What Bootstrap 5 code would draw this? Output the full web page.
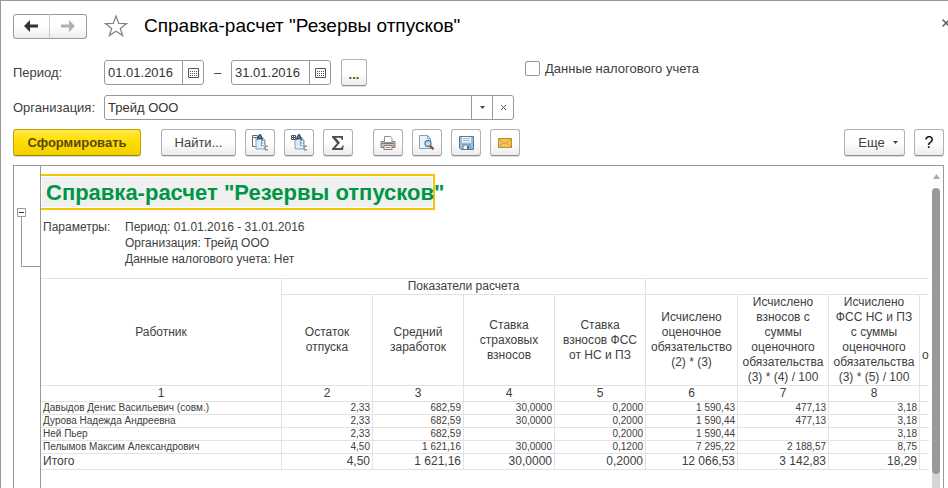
<!DOCTYPE html>
<html lang="ru">
<head>
<meta charset="utf-8">
<meta name="viewport" content="width=device-width, initial-scale=1">
<title>Справка-расчет "Резервы отпусков"</title>
<link rel="stylesheet" href="https://cdn.jsdelivr.net/npm/bootstrap@5.3.0/dist/css/bootstrap.min.css">
<style>
  body { font: 13px/16px "Liberation Sans", Arial, sans-serif; color: #404040; background: #fff; }
  svg { display: block; }
  .window { border-top: 1px solid #999; border-left: 1px solid #999; padding-left: 12px; }
  .titlebar { height: 50px; }
  .form-title { font-size: 19px; line-height: 24px; color: #000; margin: 0 0 0 16px; font-weight: 400; }
  .btn-tool { --bs-btn-padding-x: 0; --bs-btn-padding-y: 0; --bs-btn-font-size: 13px; --bs-btn-color: #404040;
    --bs-btn-border-color: #b0b0b0; --bs-btn-border-radius: 3px; --bs-btn-hover-color: #404040; --bs-btn-hover-border-color: #888;
    width: 30px; height: 27px; display: flex; align-items: center; justify-content: center; flex: none; line-height: 20px;
    background: linear-gradient(#fff 50%, #ececec); border-bottom-color: #8e8e8e; box-shadow: 0 1px 0 #ddd; }
  .btn-go { width: 128px; font-weight: 700; color: #57480f; background: linear-gradient(#ffe94a, #ffdf00 45%, #f2cf00); border-color: #c0a010; border-bottom-color: #9c8200; }
  .btn-find { width: 75px; margin-left: 11px; }
  .btn-more { width: 61px; gap: 8px; padding-left: 7px; }
  .btn-dots { width: 26px; color: #6b4a00; font-weight: 700; margin-left: 10px; padding-top: 4px; }
  .btn-help { font-size: 16px; color: #000; }
  .btn-nav { width: 37px; height: 25px; box-shadow: none; border-color: #999; }
  .btn-nav-next { width: 38px; border-left-color: #ccc; }
  .btn-plain { border: 0; background: none; padding: 0; display: flex; align-items: center; justify-content: center; }
  .btn-star { margin-left: 17px; }
  .btn-close-form { height: 44px; }
  .caption-col { width: 91px; flex: none; }
  .field { height: 25px; border: 1px solid #999; border-radius: 3px; background: #fff; }
  .field input { border: 0; outline: 0; padding: 0 0 0 3px; min-width: 0; flex: 1; color: #333; background: none; font-size: 13px; }
  .field button { width: 21px; border-left: 1px solid #999; }
  .field-date { width: 100px; }
  .field-org { width: 410px; }
  .field-dash { width: 27px; text-align: center; }
  .row-period { height: 27px; }
  .row-org { margin-top: 9px; }
  .row-cmd { margin-top: 9px; gap: 9px; padding-right: 4px; }
  .cmd-gap { width: 2px; }
  .tax-check { margin-left: 158px; height: 19px; gap: 5px; }
  .tax-check input { appearance: none; width: 15px; height: 15px; border: 1px solid #999; border-radius: 2px; margin: 0; background: #fff; }
  .tax-check input:checked { background: #777; }
  .sheet-frame { margin: 9px 4px 0 0; border: solid #999; border-width: 1px 1px 0 1px; }
  .gutter { width: 27px; border-right: 1px solid #999; padding: 42px 0 0 3px; flex: none; }
  .sheet { min-width: 0; padding-top: 8px; overflow: hidden; }
  .report-title { width: 394px; height: 36px; border: 2px solid #fbc400; border-left: 0; background: #f0f0f0; box-shadow: inset 0 0 0 1px #fff;
    font-size: 22px; line-height: 34px; font-weight: 700; color: #009646; margin: 0; padding-left: 5px; white-space: nowrap; }
  .params { margin: 9px 0 11px 2px; font-size: 12px; }
  .params dt { width: 82px; font-weight: 400; }
  .params dd { margin: 0; }
  .report { width: 100%; font-size: 12px; table-layout: fixed; border-collapse: separate; border-spacing: 0; border-top: 1px solid #e2e2e2; }
  .report th, .report td { border-right: 1px solid #e2e2e2; border-bottom: 1px solid #e2e2e2; padding: 0 2px; font-weight: 400; line-height: 15px; height: 16px; white-space: nowrap; }
  .report th { text-align: center; vertical-align: middle; }
  .report td { text-align: right; }
  .report td:first-child { text-align: left; }
  .report tr > :last-child { border-right: 0; }
  .report .heads th { height: 91px; }
  .report .detail td { font-size: 10px; line-height: 12px; height: 13px; }
  .w-name { width: 241px; } .w-num { width: 91px; } .w-sum { width: 92px; }
  .scroller { width: 8px; margin: 8px 3px 0 3px; flex: none; }
  .scroll-thumb { background: #999; border-radius: 4px; margin-top: 9px; }
  .scroll-rest { height: 18px; margin-top: -4px; background: #d6d6d6; }
  .z-front { z-index: 1; position: relative; }
</style>
</head>
<body>
<main class="window d-flex flex-column min-vh-100">
  <header class="titlebar d-flex align-items-center">
    <div class="btn-group" role="group" aria-label="Навигация">
      <button type="button" class="btn btn-tool btn-nav" aria-label="Назад"><svg width="15" height="12"><path d="M0 6 6 0 6 4.5 14 4.5 14 7.5 6 7.5 6 12z" fill="#333"/></svg></button>
      <button type="button" class="btn btn-tool btn-nav btn-nav-next" aria-label="Вперед"><svg width="15" height="12"><path d="M14 6 8 0 8 4.5 0 4.5 0 7.5 8 7.5 8 12z" fill="#b0b0b0"/></svg></button>
    </div>
    <button type="button" class="btn-plain btn-star" aria-label="В избранное"><svg width="24" height="24"><path d="M12 2 14.7 9.500 22.600 9.600 16.300 14.400 18.600 21.600 12 17.200 5.400 21.600 7.700 14.400 1.400 9.600 9.300 9.500z" fill="none" stroke="#808080" stroke-width="1.200"/></svg></button>
    <h1 class="form-title">Справка-расчет "Резервы отпусков"</h1>
    <button type="button" class="btn-plain btn-close-form ms-auto align-self-start" aria-label="Закрыть"><svg width="6" height="8"><path d="M0.500 0.500 7.500 7.500M7.500 0.500 0.500 7.500" stroke="#555" stroke-width="1.400"/></svg></button>
  </header>

  <div class="row-period d-flex align-items-center mt-2">
    <label class="caption-col" for="from">Период:</label>
    <div class="field field-date d-flex"><input id="from" value="01.01.2016"><button type="button" class="btn-plain" aria-label="Календарь"><svg width="11" height="10"><path d="M.5.5h10v9H.5z" fill="none" stroke="#555"/><path d="M2 3.500h7M2 5.500h7M2 7.500h7" stroke="#555" stroke-dasharray="1 1"/></svg></button></div>
    <span class="field-dash">–</span>
    <div class="field field-date d-flex"><input aria-label="Конец периода" value="31.01.2016"><button type="button" class="btn-plain" aria-label="Календарь"><svg width="11" height="10"><path d="M.5.5h10v9H.5z" fill="none" stroke="#555"/><path d="M2 3.500h7M2 5.500h7M2 7.500h7" stroke="#555" stroke-dasharray="1 1"/></svg></button></div>
    <button type="button" class="btn btn-tool btn-dots">...</button>
    <div class="tax-check d-flex align-items-center align-self-start"><input type="checkbox" id="tax"><label for="tax">Данные налогового учета</label></div>
  </div>

  <div class="row-org d-flex align-items-center">
    <label class="caption-col" for="org">Организация:</label>
    <div class="field field-org d-flex"><input id="org" value="Трейд ООО"><button type="button" class="btn-plain" aria-label="Выбрать"><svg width="5" height="3"><path d="M0 0h5L2.500 3z" fill="#444"/></svg></button><button type="button" class="btn-plain" aria-label="Очистить"><svg width="5" height="5"><path d="M0 0 5 5M5 0 0 5" stroke="#555"/></svg></button></div>
  </div>

  <div class="row-cmd d-flex">
    <button type="button" class="btn btn-tool btn-go">Сформировать</button>
    <button type="button" class="btn btn-tool btn-find">Найти...</button>
    <button type="button" class="btn btn-tool" aria-label="Свернуть группы"><svg width="18" height="17"><path d="M5 3h6l3 3v9H5z" fill="#dcebf7" stroke="#7fa3c0"/><path d="M1.500 1.500h5v2h-5zM1.500 4v8.500h3" fill="#fff" stroke="#666"/><path d="M6.500 6 8.500 1h1L11.500 6M8 4.500h2.500" fill="none" stroke="#1f4e79" stroke-width="1.500"/><path d="M10.500 6.500v5h2q2-.5 1-2.500 1-2-1-2.500zM10.500 9h2" fill="#fff" stroke="#8797a8"/><path d="M17 12.500q-3-1.500-3 1.500t3 1.500" fill="none" stroke="#8c8c8c" stroke-width="1.300"/></svg></button>
    <button type="button" class="btn btn-tool" aria-label="Развернуть группы"><svg width="18" height="17"><path d="M5 3h6l3 3v9H5z" fill="#dcebf7" stroke="#7fa3c0"/><path d="M1.500 1.500h4v4h-4zM1 3.500h5M3.500 1v5" fill="#fff" stroke="#555"/><path d="M6.500 6 8.500 1h1L11.500 6M8 4.500h2.500" fill="none" stroke="#1f4e79" stroke-width="1.500"/><path d="M10.500 6.500v5h2q2-.5 1-2.500 1-2-1-2.500zM10.500 9h2" fill="#fff" stroke="#8797a8"/><path d="M17 12.500q-3-1.500-3 1.500t3 1.500" fill="none" stroke="#8c8c8c" stroke-width="1.300"/></svg></button>
    <button type="button" class="btn btn-tool" aria-label="Сумма"><svg width="12" height="14"><path d="M0 0h11v4h-1.200Q9.500 1.800 7.500 1.800H3.800L8 6.800 3.300 12H8q2 0 2.500-2.500h1.200L11 14H0v-1.200L5 7.200 0 1.200z" fill="#4d4d4d"/></svg></button>
    <span class="cmd-gap"></span>
    <button type="button" class="btn btn-tool" aria-label="Печать"><svg width="16" height="14"><path d="M1 5.500h14v6H1z" fill="#cfc3b5" stroke="#7c7c7c"/><path d="M4.500.5h6l1.500 2v4h-7.500z" fill="#fff" stroke="#8495a5"/><path d="M2 7.500h12" stroke="#777"/><path d="M4 9.500h8v4H4z" fill="#fff" stroke="#77808a"/><path d="M5.500 11.500h5" stroke="#c86b3c"/><path d="M13 9.500h1" stroke="#e05a20"/></svg></button>
    <button type="button" class="btn btn-tool" aria-label="Предварительный просмотр"><svg width="16" height="15"><path d="M.5.5h8l3 3v10H.5z" fill="#e9f3fa" stroke="#7fa3c0"/><path d="M8.500.5v3h3" fill="none" stroke="#7fa3c0"/><circle cx="9" cy="8.500" r="3" fill="#bfe0f5" stroke="#667f94" stroke-width="1.300"/><path d="M11 11 14.500 14.200" stroke="#9a4d20" stroke-width="2.400"/></svg></button>
    <button type="button" class="btn btn-tool" aria-label="Сохранить"><svg width="15" height="14"><path d="M.5.5h14v13H2L.5 12z" fill="#9dbdd5" stroke="#527c9b"/><path d="M3 1h9v5.500H3z" fill="#f4f8fb"/><path d="M4 2.500h7M4 4.500h7" stroke="#9dbbd0"/><path d="M4 9h7v4.500H4z" fill="#eef3f6" stroke="#527c9b"/><path d="M8 10h2v3H8z" fill="#45708f"/></svg></button>
    <button type="button" class="btn btn-tool" aria-label="Отправить"><svg width="14" height="10"><path d="M.5.5h13v9H.5z" fill="#f2c55c" stroke="#bd8820"/><path d="M1 1 7 6 13 1M1 9 5 4.800M13 9 9 4.800" fill="none" stroke="#cf9a35"/></svg></button>
    <button type="button" class="btn btn-tool btn-more ms-auto">Еще <svg width="5" height="3"><path d="M0 0h5L2.500 3z" fill="#444"/></svg></button>
    <button type="button" class="btn btn-tool btn-help">?</button>
  </div>

  <section class="sheet-frame d-flex flex-grow-1">
    <div class="gutter"><svg width="23" height="59"><path d="M4.500 9v49.500H23" fill="none" stroke="#999"/><path d="M.5.5h8v8h-8z" fill="#fff" stroke="#999"/><path d="M2 4.500h5" stroke="#333"/></svg></div>
    <div class="sheet flex-grow-1">
      <h2 class="report-title">Справка-расчет "Резервы отпусков"</h2>
      <dl class="params d-flex">
        <dt>Параметры:</dt>
        <dd>Период: 01.01.2016 - 31.01.2016<br>Организация: Трейд ООО<br>Данные налогового учета: Нет</dd>
      </dl>
      <table class="report">
        <colgroup><col class="w-name"><col class="w-num"><col class="w-num"><col class="w-num"><col class="w-num"><col class="w-sum"><col class="w-num"><col class="w-num"><col></colgroup>
        <thead>
          <tr><th rowspan="2">Работник</th><th colspan="4">Показатели расчета</th><th colspan="4"></th></tr>
          <tr class="heads"><th>Остаток<br>отпуска</th><th>Средний<br>заработок</th><th>Ставка<br>страховых<br>взносов</th><th>Ставка<br>взносов ФСС<br>от НС и ПЗ</th><th>Исчислено<br>оценочное<br>обязательство<br>(2) * (3)</th><th>Исчислено<br>взносов с<br>суммы<br>оценочного<br>обязательства<br>(3) * (4) / 100</th><th>Исчислено<br>ФСС НС и ПЗ<br>с суммы<br>оценочного<br>обязательства<br>(3) * (5) / 100</th><th><br><br>о</th></tr>
          <tr><th>1</th><th>2</th><th>3</th><th>4</th><th>5</th><th>6</th><th>7</th><th>8</th><th></th></tr>
        </thead>
        <tbody>
          <tr class="detail"><td>Давыдов Денис Васильевич (совм.)</td><td>2,33</td><td>682,59</td><td>30,0000</td><td>0,2000</td><td>1 590,43</td><td>477,13</td><td>3,18</td><td></td></tr>
          <tr class="detail"><td>Дурова Надежда Андреевна</td><td>2,33</td><td>682,59</td><td>30,0000</td><td>0,2000</td><td>1 590,44</td><td>477,13</td><td>3,18</td><td></td></tr>
          <tr class="detail"><td>Ней Пьер</td><td>2,33</td><td>682,59</td><td></td><td>0,2000</td><td>1 590,44</td><td></td><td>3,18</td><td></td></tr>
          <tr class="detail"><td>Пелымов Максим Александрович</td><td>4,50</td><td>1 621,16</td><td>30,0000</td><td>0,1200</td><td>7 295,22</td><td>2 188,57</td><td>8,75</td><td></td></tr>
          <tr><td>Итого</td><td>4,50</td><td>1 621,16</td><td>30,0000</td><td>0,2000</td><td>12 066,53</td><td>3 142,83</td><td>18,29</td><td></td></tr>
        </tbody>
      </table>
    </div>
    <div class="scroller d-flex flex-column align-items-center">
      <svg width="7" height="5"><path d="M0 5h7L3.500 0z" fill="#aaa"/></svg>
      <div class="scroll-thumb z-front w-100 flex-grow-1"></div>
      <div class="scroll-rest w-100"></div>
    </div>
  </section>
</main>
<script src="https://cdn.jsdelivr.net/npm/bootstrap@5.3.0/dist/js/bootstrap.bundle.min.js"></script>
</body>
</html>
